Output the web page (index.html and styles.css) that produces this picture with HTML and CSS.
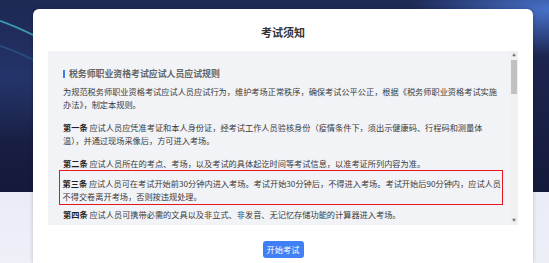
FILE: index.html
```html
<!DOCTYPE html>
<html lang="zh-CN">

<head>
    <meta charset="UTF-8">
    <title>考试须知</title>
    <link rel="stylesheet" href="styles.css">
</head>

<body class="main">
    <div class="page">
        <div class="card">
            <h1 class="card__title">考试须知</h1>
            <div class="notice">
                <div class="notice__body">
                    <h2 class="notice__heading">税务师职业资格考试应试人员应试规则</h2>
                    <p class="notice__para first">为规范税务师职业资格考试应试人员应试行为，维护考场正常秩序，确保考试公平公正，根据《税务师职业资格考试实施办法》，制定本规则。</p>
                    <p class="notice__para"><b>第一条</b> 应试人员应凭准考证和本人身份证，经考试工作人员验核身份（疫情条件下，须出示健康码、行程码和测量体温），并通过现场采像后，方可进入考场。</p>
                    <p class="notice__para"><b>第二条</b> 应试人员所在的考点、考场，以及考试的具体起讫时间等考试信息，以准考证所列内容为准。</p>
                    <div class="mark">
                        <p class="notice__para"><b>第三条</b> 应试人员可在考试开始前30分钟内进入考场。考试开始30分钟后，不得进入考场。考试开始后90分钟内，应试人员不得交卷离开考场，否则按违规处理。</p>
                    </div>
                    <p class="notice__para after_mark"><b>第四条</b> 应试人员可携带必需的文具以及非立式、非发音、无记忆存储功能的计算器进入考场。</p>
                </div>
                <div class="scroll">
                    <span class="scroll__arrow">&#9650;</span>
                    <span class="scroll__thumb"></span>
                    <span class="scroll__track"></span>
                    <span class="scroll__arrow">&#9660;</span>
                </div>
            </div>
            <div class="actions">
                <button class="btn">开始考试</button>
            </div>
        </div>
    </div>
</body>

</html>
```

FILE: styles.css
```css
html, body {
    margin: 0;
    height: 263px;
    overflow: hidden;
}

.main {
    font-family: "Noto Sans CJK SC", "Noto Sans", sans-serif;
    background:
        radial-gradient(circle at -100px 300px, transparent 295px, rgba(70, 210, 220, 0.8) 296.5px, transparent 298px) 0 0 / 100% 192px no-repeat,
        radial-gradient(circle at -100px 330px, transparent 300px, rgba(60, 150, 210, 0.35) 301px, transparent 303px) 0 0 / 100% 192px no-repeat,
        radial-gradient(ellipse at 100% 5%, rgba(80, 130, 230, 0.8), transparent 18%) 0 0 / 100% 192px no-repeat,
        radial-gradient(ellipse at 0% 40%, rgba(40, 60, 120, 0.7), transparent 40%) 0 0 / 100% 192px no-repeat,
        linear-gradient(to bottom, #1f2a57 0, #1a2148 110px, #141a3a 192px, #e9ecf6 192px, #eef0f8 263px);
}

.page {
    padding: 9px 16px 0 33px;
}

.card {
    background: #fff;
    border-radius: 6px 6px 0 0;
    height: 254px;
    padding-top: 15px;
    box-sizing: border-box;
    box-shadow: 0 0 4px rgba(0, 0, 0, 0.2);
}

.card__title {
    margin: 0;
    font-size: 11px;
    line-height: 16px;
    text-align: center;
    color: #333;
    font-weight: 700;
}

.notice {
    display: flex;
    margin: 11px 15px 0;
    height: 174px;
    background: #f2f3f7;
}

.notice__body {
    flex: 1;
    overflow: hidden;
    padding: 16px 12px 0 15px;
    font-size: 8.2px;
    line-height: 13px;
    color: #3a3a3a;
}

.notice__heading {
    margin: 0;
    font-size: 8.9px;
    line-height: 13px;
    color: #666;
    font-weight: 700;
    display: flex;
    align-items: center;
}
.notice__heading::before {
    content: "";
    width: 2px;
    height: 8px;
    background: #3b7cf5;
    margin-right: 4px;
}

.notice__para {
    margin: 10px 0 0;
}
.notice__para.first {
    margin-top: 5px;
}
.notice__para b {
    color: #1f1f1f;
}

.mark {
    border: 1.5px solid #e4161f;
    margin: 0 -5px 0 -4px;
    padding: 5.5px 0 1.5px 2.5px;
}
.mark .notice__para {
    margin: 0;
}
.notice__para.after_mark {
    margin-top: 2.5px;
}

.scroll {
    width: 8px;
    display: flex;
    flex-direction: column;
    align-items: center;
    background: #f1f1f1;
}
.scroll__arrow {
    font-size: 4px;
    line-height: 8px;
    height: 9px;
    color: #777;
}
.scroll__thumb {
    width: 6px;
    height: 34px;
    background: #c1c1c1;
}
.scroll__track {
    flex: 1;
}

.actions {
    display: flex;
    justify-content: center;
    padding-top: 16px;
}

.btn {
    font-family: inherit;
    font-size: 8.2px;
    line-height: 17px;
    height: 17px;
    width: 41px;
    padding: 0;
    border: none;
    border-radius: 3px;
    background: #3f80f6;
    color: #fff;
}
```
